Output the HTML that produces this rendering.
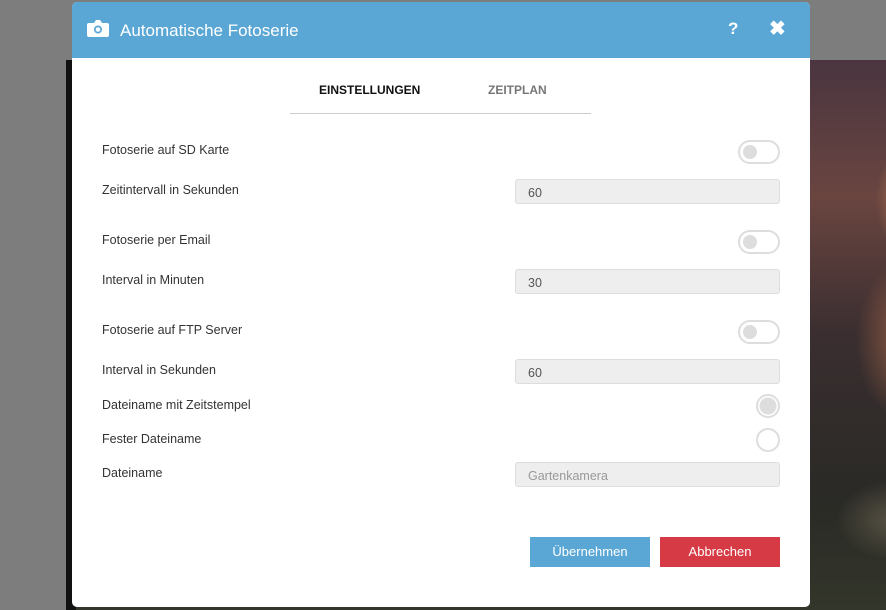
<!DOCTYPE html>
<html><head><meta charset="utf-8"><style>
*{box-sizing:border-box;margin:0;padding:0}
body{width:886px;height:610px;overflow:hidden;position:relative;background:#7d7d7d;font-family:"Liberation Sans",sans-serif}
.img{position:absolute;left:66px;top:60px;right:0;bottom:0;background:
radial-gradient(ellipse 40px 60px at 850px 140px,rgba(230,150,90,.7),transparent),
radial-gradient(ellipse 50px 80px at 840px 280px,rgba(200,120,80,.6),transparent),
radial-gradient(ellipse 60px 40px at 830px 460px,rgba(120,110,90,.6),transparent),
linear-gradient(180deg,#4a3540 0%,#6a4540 25%,#3a2e30 50%,#2a2a26 80%,#33362a 100%)}
.img:before{content:"";position:absolute;left:0;top:0;width:10px;bottom:0;background:#111}
.modal{position:absolute;left:72px;top:2px;width:738px;height:605px;background:#fff;border-radius:5px;overflow:hidden}
.hd{height:56px;background:#5aa7d6;color:#fff;position:relative}
.hd .t{position:absolute;left:48px;top:19px;font-size:17px}
.cam{position:absolute;left:15px;top:17px}
.q{position:absolute;left:656px;top:17px;font-weight:bold;font-size:17px}
.x{position:absolute;left:697px;top:14px;font-weight:bold;font-size:20px}
.tabs{position:absolute;left:218px;top:56px;width:301px;height:56px;border-bottom:1px solid #ccc}
.tab{position:absolute;top:25px;font-size:12px;font-weight:bold}
.lbl{position:absolute;left:30px;font-size:12.5px;color:#333}
.tg{position:absolute;left:666px;width:42px;height:24px;border:2px solid #ddd;border-radius:12px}
.tg:after{content:"";position:absolute;left:3px;top:3px;width:14px;height:14px;border-radius:50%;background:#ddd}
.in{position:absolute;left:443px;width:265px;height:25px;background:#eee;border:1px solid #ddd;border-radius:3px;font-size:12.5px;color:#555;padding:6px 12px}
.rd{position:absolute;left:684px;width:24px;height:24px;border:2px solid #ddd;border-radius:50%}
.btn{position:absolute;top:535px;width:120px;height:30px;color:#fff;font-size:13px;text-align:center;line-height:30px}
</style></head><body>
<div class="img"></div>
<div class="modal">
<div class="hd">
<svg class="cam" width="22" height="18" viewBox="0 0 22 18"><path d="M2 4h5l2-3h4l2 3h5a2 2 0 012 2v10a2 2 0 01-2 2H2a2 2 0 01-2-2V6a2 2 0 012-2z" fill="#fff"/><circle cx="11" cy="10.5" r="4" fill="#5aa7d6"/><circle cx="11" cy="10.5" r="2.3" fill="#fff"/></svg>
<div class="t">Automatische Fotoserie</div>
<div class="q">?</div><div class="x">✖</div>
</div>
<div class="tabs"><div class="tab" style="left:29px;color:#111">EINSTELLUNGEN</div><div class="tab" style="left:198px;color:#777">ZEITPLAN</div></div>
<div class="lbl" style="top:141px">Fotoserie auf SD Karte</div><div class="tg" style="top:138px"></div>
<div class="lbl" style="top:181px">Zeitintervall in Sekunden</div><div class="in" style="top:177px">60</div>
<div class="lbl" style="top:231px">Fotoserie per Email</div><div class="tg" style="top:228px"></div>
<div class="lbl" style="top:271px">Interval in Minuten</div><div class="in" style="top:267px">30</div>
<div class="lbl" style="top:321px">Fotoserie auf FTP Server</div><div class="tg" style="top:318px"></div>
<div class="lbl" style="top:361px">Interval in Sekunden</div><div class="in" style="top:357px">60</div>
<div class="lbl" style="top:396px">Dateiname mit Zeitstempel</div><div class="rd" style="top:392px;background:radial-gradient(circle,#ddd 8px,#fff 9px)"></div>
<div class="lbl" style="top:430px">Fester Dateiname</div><div class="rd" style="top:426px"></div>
<div class="lbl" style="top:464px">Dateiname</div><div class="in" style="top:460px;color:#999">Gartenkamera</div>
<div class="btn" style="left:458px;background:#5aa7d6">Übernehmen</div>
<div class="btn" style="left:588px;background:#d63a44">Abbrechen</div>
</div>
</body></html>
